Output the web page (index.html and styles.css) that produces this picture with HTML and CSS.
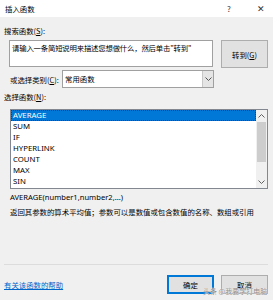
FILE: index.html
```html
<!DOCTYPE html>
<html lang="zh-CN">
<head>
    <meta charset="UTF-8">
    <title>插入函数</title>
    <link rel="stylesheet" href="styles.css">
</head>
<body>
    <div class="dialog">
        <div class="titlebar">
            <span class="title">插入函数</span>
            <span class="help">?</span>
            <span class="close">✕</span>
        </div>

        <div class="content">
            <div class="label top-label">搜索函数(<u>S</u>):</div>
            <div class="search-row">
                <div class="search-box">请输入一条简短说明来描述您想做什么，然后单击"转到"</div>
                <button class="btn go-btn">转到(<u>G</u>)</button>
            </div>

            <div class="category-row">
                <span class="label">或选择类别(<u>C</u>):</span>
                <div class="select">
                    <span class="select-value">常用函数</span>
                    <span class="select-arrow">
                        <svg width="7" height="4" viewBox="0 0 7 4"><path d="M0.5 0.5 L3.5 3.5 L6.5 0.5" fill="none" stroke="#555" stroke-width="1"/></svg>
                    </span>
                </div>
            </div>

            <div class="label list-label">选择函数(<u>N</u>):</div>
            <div class="listbox">
                <ul class="items">
                    <li class="item selected">AVERAGE</li>
                    <li class="item">SUM</li>
                    <li class="item">IF</li>
                    <li class="item">HYPERLINK</li>
                    <li class="item">COUNT</li>
                    <li class="item">MAX</li>
                    <li class="item">SIN</li>
                </ul>
                <div class="scrollbar">
                    <svg class="arrow" width="7" height="4" viewBox="0 0 7 4"><path d="M0.5 3.5 L3.5 0.5 L6.5 3.5" fill="none" stroke="#606060" stroke-width="1"/></svg>
                    <div class="track"><div class="thumb"></div></div>
                    <svg class="arrow" width="7" height="4" viewBox="0 0 7 4"><path d="M0.5 0.5 L3.5 3.5 L6.5 0.5" fill="none" stroke="#606060" stroke-width="1"/></svg>
                </div>
            </div>

            <div class="signature">AVERAGE(number1,number2,...)</div>
            <div class="description">返回其参数的算术平均值；参数可以是数值或包含数值的名称、数组或引用</div>

            <div class="separator"></div>

            <div class="footer">
                <a class="help-link" href="#">有关该函数的帮助</a>
                <div class="buttons">
                    <button class="btn default-btn">确定</button>
                    <button class="btn">取消</button>
                </div>
            </div>
        </div>
        <span class="watermark">头条 @我要学打电脑</span>
    </div>
</body>
</html>
```

FILE: styles.css
```css
* {
    margin: 0;
    padding: 0;
    box-sizing: border-box;
}

body {
    background: #f0f0f0;
    font-family: "Noto Sans CJK SC", "Noto Sans", sans-serif;
    font-size: 7.4px;
    color: #000;
}

.dialog {
    position: relative;
    width: 273px;
    height: 300px;
}

.titlebar {
    height: 17px;
    background: #fff;
    display: flex;
    align-items: center;
    padding-left: 5px;
    font-size: 7.4px;
}

.title {
    flex: 1;
}

.help {
    width: 8px;
    color: #333;
    margin-right: 22px;
    font-size: 8px;
}

.close {
    width: 10px;
    color: #333;
    margin-right: 6px;
    font-size: 9px;
}

.content {
    padding: 0 5px 0 4px;
}

.label {
    line-height: 11px;
    white-space: nowrap;
}

u {
    text-decoration: underline;
}

.top-label {
    margin-top: 8px;
}

.search-row {
    display: flex;
    margin-top: 4px;
    padding-left: 5px;
}

.search-box {
    width: 204px;
    height: 27px;
    background: #fff;
    border: 1px solid #a0a0a0;
    padding: 1px 2px;
    line-height: 11px;
    letter-spacing: -0.2px;
    white-space: nowrap;
    overflow: hidden;
}

.btn {
    width: 47px;
    height: 19px;
    background: #e1e1e1;
    border: 1px solid #adadad;
    font-family: inherit;
    font-size: 7.4px;
    color: #000;
}

.go-btn {
    height: 28px;
    margin-left: 8px;
}

.category-row {
    display: flex;
    align-items: center;
    margin-top: 2px;
    padding-left: 6px;
}

.category-row .label {
    width: 52px;
}

.select {
    display: flex;
    width: 152px;
    height: 18px;
    background: #fff;
    border: 1px solid #a0a0a0;
}

.select-value {
    flex: 1;
    line-height: 16px;
    padding-left: 2px;
}

.select-arrow {
    width: 11px;
    background: #e5e5e5;
    border-left: 1px solid #c8c8c8;
    display: flex;
    align-items: center;
    justify-content: center;
}

.list-label {
    margin-top: 3px;
}

.listbox {
    display: flex;
    margin-top: 7px;
    margin-left: 6px;
    width: 258px;
    height: 80px;
    background: #fff;
    border: 1px solid #828790;
}

.items {
    list-style: none;
    flex: 1;
}

.item {
    height: 11px;
    line-height: 11px;
    padding-left: 2px;
    font-family: "Noto Sans", sans-serif;
    font-size: 7.8px;
}

.selected {
    background: #0078d7;
    color: #fff;
    outline: 1px dotted #1e3a6e;
    outline-offset: -1px;
}

.scrollbar {
    width: 11px;
    background: #f0f0f0;
    display: flex;
    flex-direction: column;
    align-items: center;
}

.arrow {
    margin: 4px 0;
}

.track {
    flex: 1;
    width: 100%;
    padding: 0 1px;
}

.thumb {
    height: 40px;
    background: #cdcdcd;
}

.signature {
    margin-top: 3px;
    margin-left: 6px;
    line-height: 11px;
    font-family: "Noto Sans", sans-serif;
    font-size: 7.6px;
}

.description {
    margin-top: 3px;
    margin-left: 6px;
    line-height: 11px;
    white-space: nowrap;
}

.separator {
    margin-top: 47px;
    height: 1px;
    background: #dcdcdc;
}

.footer {
    display: flex;
    align-items: center;
    justify-content: space-between;
    margin-top: 10px;
}

.help-link {
    color: #0066cc;
    text-decoration: underline;
}

.buttons {
    display: flex;
    gap: 7px;
}

.default-btn {
    border: 1px solid #0078d7;
    box-shadow: inset 0 0 0 1px #0078d7;
}

.watermark {
    position: absolute;
    left: 203px;
    top: 286px;
    font-size: 7px;
    color: #8a8a8a;
    text-shadow: 0 0 1px #fff, 0 0 1px #fff;
    white-space: nowrap;
}
```
